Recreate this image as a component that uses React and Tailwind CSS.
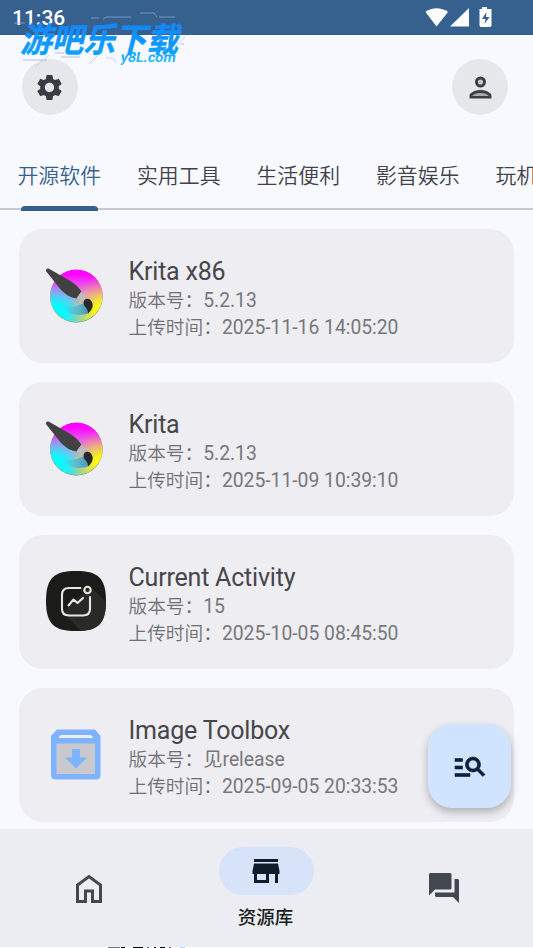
import React, { useState } from "react";
import { MdManageSearch, MdQuestionAnswer, MdSettings, MdStore } from "react-icons/md";

const tabs = ["开源软件", "实用工具", "生活便利", "影音娱乐", "玩机"];

const apps = [
  { name: "Krita x86", version: "5.2.13", time: "2025-11-16 14:05:20", icon: "krita" },
  { name: "Krita", version: "5.2.13", time: "2025-11-09 10:39:10", icon: "krita" },
  { name: "Current Activity", version: "15", time: "2025-10-05 08:45:50", icon: "activity" },
  { name: "Image Toolbox", version: "见release", time: "2025-09-05 20:33:53", icon: "toolbox" },
];

const KritaIcon = () => (
  <svg viewBox="0 0 60 60" className="w-[60px] h-[60px]">
    <defs>
      <linearGradient id="kritaBase" x1="0" y1="0" x2="0" y2="1">
        <stop offset="0.08" stopColor="#ff00ff" />
        <stop offset="0.5" stopColor="#d59cdf" />
        <stop offset="0.72" stopColor="#9ddfdc" />
        <stop offset="1" stopColor="#70ffb0" />
      </linearGradient>
      <radialGradient id="kritaCyan" cx="0.08" cy="0.85" r="0.65">
        <stop offset="0.25" stopColor="#00ffff" />
        <stop offset="1" stopColor="#30b0ff" stopOpacity="0" />
      </radialGradient>
      <radialGradient id="kritaYellow" cx="1" cy="0.8" r="0.65">
        <stop offset="0.2" stopColor="#ffff00" />
        <stop offset="1" stopColor="#ff9060" stopOpacity="0" />
      </radialGradient>
      <linearGradient id="kritaSwoosh" x1="0" y1="0" x2="1" y2="0">
        <stop offset="0" stopColor="#35d5ee" stopOpacity="0.1" />
        <stop offset="1" stopColor="#3f8fc8" />
      </linearGradient>
    </defs>
    <circle cx="30.4" cy="31.4" r="26.2" fill="#6b6f6f" />
    <circle cx="30.4" cy="30.8" r="26.2" fill="url(#kritaBase)" />
    <circle cx="30.4" cy="30.8" r="26.2" fill="url(#kritaCyan)" />
    <circle cx="30.4" cy="30.8" r="26.2" fill="url(#kritaYellow)" />
    <path d="M15 40C22 43 31 42 38 38L43 48C34 52 20 50 15 40Z" fill="url(#kritaSwoosh)" />
    <path d="M0.300 6.500C-.8 4.500 1 2.700 3 3.700L21 14C28 18 33.500 22.500 35.500 27L31 33.500C24 33 17 28 11.500 20.500Z" fill="#414141" />
    <path d="M35 27L42 33.500L38 38.500L30.500 33.300Z" fill="#bdbdbd" />
    <path d="M37.500 37.500C37.500 34 41.500 32.500 44.500 35C48 39 47.500 44 42 48.500C42.500 43.500 37.500 42 37.500 37.500Z" fill="#292929" />
  </svg>
);

const ActivityIcon = () => (
  <svg viewBox="0 0 60 60" className="w-[60px] h-[60px]">
    <defs>
      <clipPath id="activityShape">
        <path d="M30 0C51 0 60 6 60 30S51 60 30 60S0 54 0 30S9 0 30 0Z" />
      </clipPath>
    </defs>
    <g clipPath="url(#activityShape)">
      <path d="M0 0H60V60H0Z" fill="#1b1b1a" />
      <path d="M44 15L62 33V62H37L17 42Z" fill="#292928" />
    </g>
    <g fill="none" stroke="#e9e8da" strokeWidth="2.100" strokeLinecap="round" strokeLinejoin="round">
      <path d="M34.500 17H23C18.500 17 16 19.500 16 24V38C16 42 18.500 44.500 23 44.500H37C41.500 44.500 44 42 44 38V26" />
      <path d="M22.500 34.500L27.500 28.500L31.500 32L37 27" />
      <circle cx="41.500" cy="19" r="3.200" />
    </g>
  </svg>
);

const ToolboxIcon = () => (
  <svg viewBox="0 0 60 60" className="w-[60px] h-[60px]">
    <path d="M8 18H52V53H8Z" fill="#c9c9cd" />
    <path
      fillRule="evenodd"
      d="M11 5.500H49L54.500 12V51Q54.500 55.500 50 55.500H10Q5 55.500 5 51V12ZM15.500 11Q13.500 11 12.500 14H47Q46 11 44 11ZM10.500 19.500V50H49V19.500Z"
      fill="#7eb3ff"
    />
    <path d="M26 25H34V33.500H41L30 44.500L19 33.500H26Z" fill="#7eb3ff" />
  </svg>
);

const icons = { krita: KritaIcon, activity: ActivityIcon, toolbox: ToolboxIcon };

const AppCard = ({ app }) => {
  const Icon = icons[app.icon];
  return (
    <div className="flex h-[134px] shrink-0 rounded-[24px] bg-[#eeedf2] pl-[27px] pt-[27px]">
      <div className="pt-[9px]">
        <Icon />
      </div>
      <div className="ml-[22.5px] text-[18.7px] font-[350] leading-[27px] text-[#707074]">
        <h2 className="mb-px mt-px text-[25px] font-normal leading-[29px] tracking-[-0.2px] text-[#46464a]">{app.name}</h2>
        <p className="h-[27px]">
          版本号：<span className="text-[19.3px] font-normal text-[#77777b]">{app.version}</span>
        </p>
        <p className="h-[27px]">
          上传时间：<span className="text-[19.3px] font-normal text-[#77777b]">{app.time}</span>
        </p>
      </div>
    </div>
  );
};

const StatusBar = () => (
  <div className="flex h-[35px] shrink-0 items-center bg-[#36618e] pl-3 text-white">
    <span className="grow pt-[3px] text-[21px] font-medium">11:36</span>
    <svg viewBox="0 0 70 24" className="mr-[38px] h-6 w-[70px]" fill="white">
      <path d="M0.500 6C7 1 16 1 23 6L11.500 20.500Z" />
      <path d="M44 2V20.500H25Z" />
      <path
        fillRule="evenodd"
        d="M57 1H62V3H66.500V19Q66.500 21 65 21H56Q54.500 21 54.500 19V3H57ZM61.500 6L57 13H60.500L59.500 18L64.500 11H61Z"
      />
    </svg>
  </div>
);

const Watermark = () => (
  <div className="pointer-events-none absolute left-[18px] top-3 h-[58px] w-[170px]">
    <svg viewBox="0 0 170 58" className="h-[58px] w-[170px] overflow-visible">
      <defs>
        <linearGradient id="markBlue" x1="0" y1="0" x2="0" y2="1">
          <stop offset="0" stopColor="#1583f8" />
          <stop offset="1" stopColor="#08a7ff" />
        </linearGradient>
        <linearGradient id="markCyan" x1="0" y1="0" x2="0" y2="1">
          <stop offset="0" stopColor="#1693f5" />
          <stop offset="1" stopColor="#25c7f4" />
        </linearGradient>
      </defs>
      <g fill="none" strokeWidth="0.7">
        <path d="M85 7L89 5H113M122 1H136L139 5M141 5H157" stroke="#9cabd4" />
        <path d="M-4 11H7M73 6H81M37 41H46M43 45H62M5 48H29M163 32H166" stroke="#9aa5e0" />
        <path d="M17 55L31 43M71 52L82 41M154 39L167 25M88 46H95L98 51" stroke="#b9c7e9" />
      </g>
      <text
        transform="translate(2 39.5) skewX(-14)"
        fontSize="34"
        fontWeight="700"
        textLength="158"
        lengthAdjust="spacingAndGlyphs"
        fill="url(#markBlue)"
        stroke="url(#markBlue)"
        strokeWidth="0.4"
      >
        游吧乐下载
      </text>
      <text
        transform="translate(102 49.5) skewX(-10)"
        fontSize="14"
        fontWeight="700"
        textLength="55"
        lengthAdjust="spacingAndGlyphs"
        fill="url(#markCyan)"
      >
        y8L.com
      </text>
    </svg>
  </div>
);

const App = () => {
  const [activeTab, setActiveTab] = useState(0);

  return (
    <div className="relative flex h-[948px] w-[533px] flex-col overflow-hidden bg-[#f8f9ff] font-[Roboto,'Noto_Sans_CJK_SC',sans-serif]">
      <StatusBar />

      {/* Header */}
      <header className="flex h-[104px] shrink-0 items-start justify-between pl-[22px] pr-[25px] pt-6">
        <button className="flex h-14 w-14 items-center justify-center rounded-full bg-[#e6e7eb] pr-px text-[#393c43]">
          <MdSettings size={31} />
        </button>
        <button className="flex h-14 w-14 items-center justify-center rounded-full bg-[#e6e7eb]">
          <svg viewBox="0 0 24 24" className="h-[33px] w-[33px]">
            <path d="M5 19V17.500C5 15 9 13.500 12 13.500S19 15 19 17.500V19Z" fill="#aaabb0" />
            <circle cx="12" cy="8" r="3" fill="#c5c6ca" />
            <path
              d="M12 4a4 4 0 1 0 0 8a4 4 0 0 0 0-8Zm0 2.100a1.900 1.900 0 1 1 0 3.800a1.900 1.900 0 0 1 0-3.800ZM12 14c-2.700 0-8 1.300-8 4v2h16v-2c0-2.700-5.300-4-8-4Zm6 4.100H6c.3-.8 3.300-2.100 6-2.100s5.700 1.300 6 2.100Z"
              fill="#3d3e43"
            />
          </svg>
        </button>
      </header>

      {/* Tabs */}
      <nav className="flex h-[71px] shrink-0 gap-9 border-b-2 border-[#c6c9d2] pl-[17.5px]">
        {tabs.map((tab, i) => (
          <button
            key={tab}
            onClick={() => setActiveTab(i)}
            className={`flex w-[83.500px] shrink-0 flex-col whitespace-nowrap text-[20.900px] font-[350] ${
              i === activeTab ? "text-[#36618e]" : "text-[#3f4246]"
            } ${i === 4 ? "items-start" : "items-center"}`}
          >
            <span className="mt-[22px] h-[45px] shrink-0 leading-[31px]">{tab}</span>
            {i === activeTab && <span className="h-[5px] w-[77px] shrink-0 rounded-t-[4px] bg-[#36618e]" />}
          </button>
        ))}
      </nav>

      {/* App list */}
      <main className="flex min-h-0 grow flex-col gap-[19px] overflow-hidden px-[19px] pt-[19px]">
        {apps.map((app) => (
          <AppCard key={app.name} app={app} />
        ))}
      </main>

      {/* Bottom navigation */}
      <footer className="grid h-[118px] shrink-0 grid-cols-3 bg-[#ecedf2] text-[#43474e]">
        <button className="flex items-center justify-center">
          <svg viewBox="0 0 28 30" className="mt-px h-[30px] w-[28px]" fill="none" stroke="currentColor" strokeWidth="3">
            <path d="M2.500 27.500V11L14 2.500L25.500 11V27.500H17.500V17H10.500V27.500Z" />
          </svg>
        </button>
        <button className="flex flex-col items-center pt-[18px]">
          <span className="flex h-[48px] w-[95px] items-center justify-center rounded-full bg-[#d7e3f8] text-[#101c2b]">
            <MdStore size={36} />
          </span>
          <span className="mr-[2px] mt-[10px] text-[18.500px] font-medium leading-[27px] text-[#191c20]">资源库</span>
        </button>
        <button className="flex items-center justify-center">
          <MdQuestionAnswer size={36} />
        </button>
      </footer>
      <div className="flex h-px shrink-0 bg-white pl-[108px]">
        <span className="w-3 bg-[#77777c]" />
        <span className="ml-px w-1 bg-black" />
        <span className="ml-2 w-[10px] bg-black" />
        <span className="ml-[4px] w-[2px] bg-[#3b5c82]" />
        <span className="ml-[5px] w-[2px] bg-black" />
        <span className="ml-[4px] w-[5px] bg-black" />
        <span className="ml-[4px] w-[2px] bg-[#684a88]" />
        <span className="ml-[9px] w-[5px] bg-[#b8d8ff]" />
      </div>

      <button className="absolute bottom-[140px] right-[22px] flex h-[84px] w-[83px] items-center justify-center rounded-[24px] bg-[#d1e4ff] text-[#0b2138] shadow-[0_4px_9px_rgba(0,0,0,0.27)]">
        <MdManageSearch size={36} className="[&>path:last-child]:stroke-current [&>path:last-child]:stroke-[0.4]" />
      </button>

      <Watermark />
    </div>
  );
};

export default App;
